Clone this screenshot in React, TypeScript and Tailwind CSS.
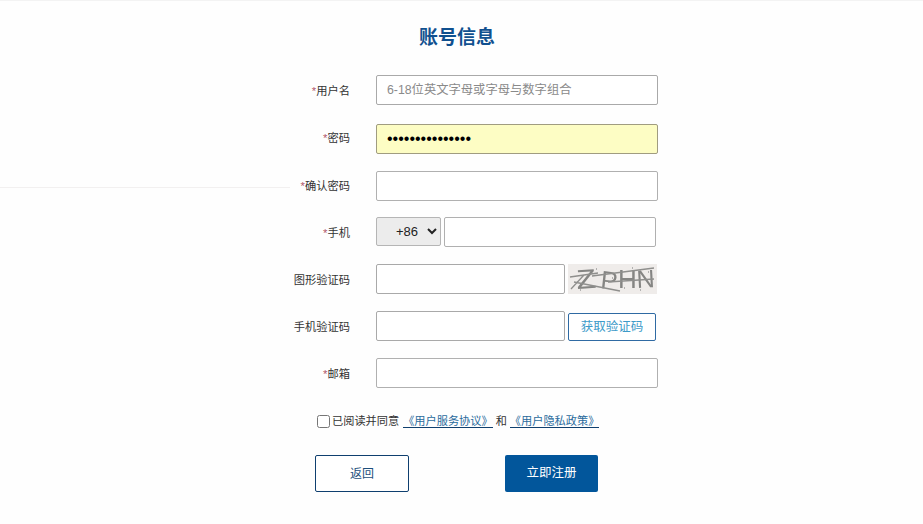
import React from "react";

const font = { fontFamily: '"Liberation Sans","Noto Sans CJK SC",sans-serif' };

function Label({ star, text, pad = "pt-[2px]" }: { star?: boolean; text: string; pad?: string }) {
  return (
    <label className={`w-[350px] shrink-0 ${pad} text-right text-[11.25px] leading-[16px] text-[#333333]`}>
      {star && <span className="text-[#b0556a]">*</span>}
      {text}
    </label>
  );
}

const box = "h-[30px] rounded-[2px] border border-[#a9a9a9] bg-white outline-none";

export default function App() {
  return (
    <div style={font} className="relative flex h-[524px] w-[923px] flex-col overflow-hidden border-t border-[#f3f3f3] bg-[#fefefe]">
      <div className="absolute left-0 top-[186px] h-px w-[290px] bg-[#f2f0f0]" />
      <h1 className="mt-[24px] h-[26px] pr-[9px] text-center text-[19px] font-bold leading-[26px] text-[#10508f]">账号信息</h1>

      <div className="mt-[24px] flex items-center gap-[26px]">
        <Label star text="用户名" />
        <input className={`${box} w-[282px] border-[#9a9a9a] px-[10px] text-[12.3px] text-[#333] placeholder:text-[#8a8a8a]`} placeholder="6-18位英文字母或字母与数字组合" />
      </div>

      <div className="mt-[19px] flex items-center gap-[26px]">
        <Label star text="密码" pad="pb-[2px]" />
        <input type="password" readOnly value="123456789012345" className="h-[30px] w-[282px] rounded-[2px] border border-[#a09c80] bg-[#fdfdc4] px-[10px] text-[16px] text-black outline-none" />
      </div>

      <div className="mt-[17px] flex items-center gap-[26px]">
        <Label star text="确认密码" pad="pt-0" />
        <input className={`${box} w-[282px] border-[#b0b0b0]`} />
      </div>

      <div className="mt-[16px] flex items-center gap-[26px]">
        <Label star text="手机" />
        <div className="flex gap-[3px]">
          <select className="h-[29px] w-[65px] rounded-[2px] border border-[#b5b5b5] bg-[#ececec] pl-[15px] text-[13px] text-[#222] outline-none">
            <option>+86</option>
          </select>
          <input className={`${box} w-[212px] border-[#b0b0b0]`} />
        </div>
      </div>

      <div className="mt-[17px] flex items-center gap-[26px]">
        <Label text="图形验证码" />
        <div className="flex items-center gap-[3px]">
          <input className={`${box} w-[189px] border-[#8c8c8c]`} />
          <svg width="89" height="30" viewBox="0 0 89 30" className="shrink-0">
            <rect width="89" height="30" fill="#efecea" />
            <g fill="#858583" fontFamily="Liberation Sans" style={{ filter: "blur(0.5px)" }}>
              <text x="0" y="0" fontSize="27" transform="translate(9 25) rotate(-4) scale(1.2 1)">Z</text>
              <text x="0" y="0" fontSize="25" transform="translate(32 24) rotate(6)">P</text>
              <text x="0" y="0" fontSize="26" transform="translate(50 24)">H</text>
              <text x="0" y="0" fontSize="25" transform="translate(69 24) rotate(-3)">N</text>
            </g>
            <path d="M2 13 L30 9 M6 18 L52 27 M24 12 L86 4 M40 18 L86 15 M3 25 L16 11" stroke="#8f8f8d" strokeWidth="1.3" fill="none" style={{ filter: "blur(0.4px)" }} />
            <path d="M28 5h1M44 14h1M64 4h1M80 8h1M12 26h1M56 24h1M72 26h1" stroke="#777" strokeWidth="1.2" />
          </svg>
        </div>
      </div>

      <div className="mt-[17px] flex items-center gap-[26px]">
        <Label text="手机验证码" />
        <div className="flex items-end gap-[3px]">
          <input className={`${box} w-[189px] border-[#8c8c8c]`} />
          <button className="h-[28px] w-[88px] rounded-[2px] border border-[#2f6aa3] bg-white pt-[1px] text-[12.5px] text-[#3d9bc9]">获取验证码</button>
        </div>
      </div>

      <div className="mt-[17px] flex items-center gap-[26px]">
        <Label star text="邮箱" />
        <input className={`${box} w-[282px] border-[#b0b0b0]`} />
      </div>

      <div className="ml-[317px] mt-[25px] flex h-[16px] items-center text-[11.2px] text-[#333]">
        <input type="checkbox" className="m-0 h-[13px] w-[13px] shrink-0" />
        <span className="ml-[2px]">已阅读并同意</span>
        <a className="ml-[4px] inline-block border-b border-[#10406f] leading-[12px] text-[#2a6b9c]">《用户服务协议》</a>
        <span className="mx-[3px]">和</span>
        <a className="inline-block border-b border-[#10406f] leading-[12px] text-[#2a6b9c]">《用户隐私政策》</a>
      </div>

      <div className="ml-[315px] mt-[26px] flex gap-[96px]">
        <button className="h-[37px] w-[94px] rounded-[2px] border border-[#0f3f6f] bg-white text-[12px] text-[#1d4f7c]">返回</button>
        <button className="h-[37px] w-[93px] rounded-[2px] bg-[#02569b] text-[12.5px] text-white">立即注册</button>
      </div>
    </div>
  );
}
